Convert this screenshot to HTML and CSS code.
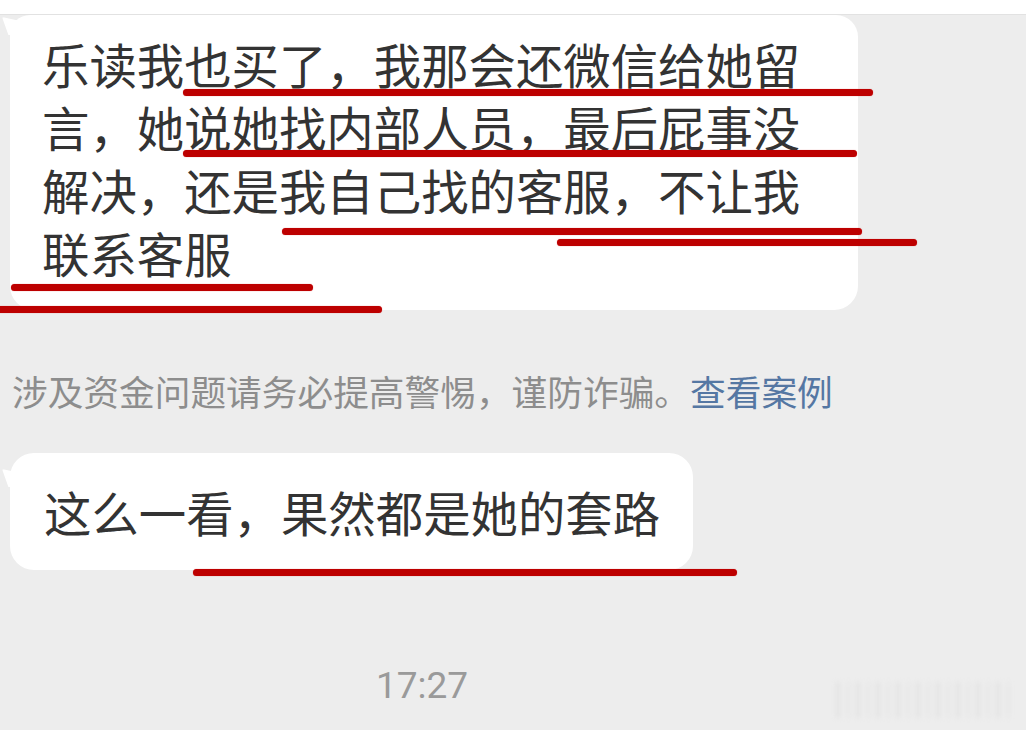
FILE: index.html
```html
<!DOCTYPE html>
<html lang="zh-CN">
<head>
<meta charset="utf-8">
<title>聊天记录</title>
<link rel="stylesheet" href="styles.css">
</head>
<body>
<div class="screen">
  <div class="topbar"></div>
  <div class="chat">
    <div class="bubble bubble-long">
      <p class="msg msg-wrap">乐读我也买了，我那会还微信给她留言，她说她找内部人员，最后屁事没解决，还是我自己找的客服，不让我联系客服</p>
    </div>
    <p class="notice">涉及资金问题请务必提高警惕，谨防诈骗。<span class="notice-link">查看案例</span></p>
    <div class="bubble bubble-short">
      <p class="msg">这么一看，果然都是她的套路</p>
    </div>
    <div class="time-row"><span class="time">17:27</span></div>
  </div>

  <!-- hand-drawn marker strokes over the messages -->
  <div class="marks">
    <span class="mark" style="left:183px;top:89px;width:690px"></span>
    <span class="mark" style="left:183px;top:150px;width:674px"></span>
    <span class="mark" style="left:282px;top:228px;width:580px"></span>
    <span class="mark" style="left:557px;top:239px;width:360px"></span>
    <span class="mark" style="left:11px;top:284px;width:302px"></span>
    <span class="mark" style="left:-4px;top:306px;width:386px"></span>
    <span class="mark" style="left:193px;top:569px;width:544px"></span>
  </div>

  <div class="watermark"></div>
</div>
</body>
</html>
```

FILE: styles.css
```css
* {
  box-sizing: border-box;
}

html,
body {
  margin: 0;
  padding: 0;
  background: #ededed;
}

body {
  font-family: "Noto Sans CJK SC", "Noto Sans", sans-serif;
  color: #333333;
}

.screen {
  position: relative;
  width: 1026px;
  height: 730px;
  overflow: hidden;
}

.topbar {
  height: 15px;
  background: #ffffff;
  border-bottom: 1px solid #e2e2e2;
}

.chat {
  display: flex;
  flex-direction: column;
  align-items: flex-start;
  padding-left: 10px;
}

.bubble {
  position: relative;
  background: #ffffff;
  border-radius: 24px;
}

/* little tail pointing at the sender avatar */
.bubble::before {
  content: "";
  position: absolute;
  left: -8px;
  top: 16px;
  width: 16px;
  height: 18px;
  background: #ffffff;
  border-radius: 2px 0 0 0;
  clip-path: polygon(0 0, 100% 20%, 100% 100%, 40% 100%);
}

.bubble-long {
  width: 848px;
  padding: 17px 54px 26px 32px;
  border-top-left-radius: 20px;
  border-top-right-radius: 22px;
}

.bubble-long::before {
  top: 2px;
}

.bubble-short {
  margin-top: 38px;
  padding: 27px 33px 27px 34px;
}

.msg {
  margin: 0;
  font-size: 47.4px;
  line-height: 63px;
  white-space: nowrap;
}

.msg-wrap {
  width: 762px;
  white-space: normal;
}

.notice {
  margin: 57px 0 0 2px;
  font-size: 35.7px;
  line-height: 48px;
  color: #8d8d8d;
  white-space: nowrap;
}

.notice-link {
  color: #5577a3;
}

.time-row {
  width: 824px;
  margin-top: 92px;
  text-align: center;
}

.time {
  font-family: "Roboto", "Liberation Sans", sans-serif;
  font-size: 37px;
  line-height: 48px;
  color: #9a9a9a;
}

.marks {
  position: absolute;
  inset: 0;
  pointer-events: none;
}

.mark {
  position: absolute;
  height: 7px;
  border-radius: 4px;
  background: #bd0000;
  box-shadow: 0 0 1px rgba(200, 0, 0, 0.6);
}

/* faded platform watermark in the corner */
.watermark {
  position: absolute;
  left: 836px;
  top: 682px;
  width: 180px;
  height: 36px;
  background: repeating-linear-gradient(90deg,
    rgba(200, 200, 200, 0.5) 0 4px,
    rgba(237, 237, 237, 0) 4px 11px,
    rgba(215, 215, 215, 0.45) 11px 14px,
    rgba(237, 237, 237, 0) 14px 20px);
  filter: blur(2.5px);
  opacity: 0.55;
}
```
